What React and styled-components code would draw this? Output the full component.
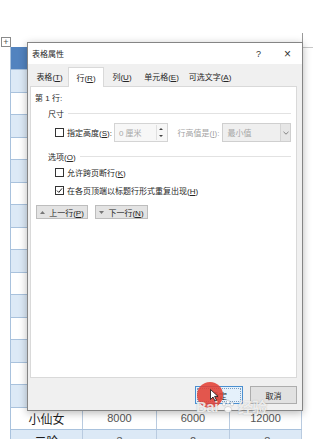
import React from 'react';
import styled, { createGlobalStyle } from 'styled-components';

const GlobalStyle = createGlobalStyle`
  html, body {
    margin: 0;
    padding: 0;
    background: #fff;
  }
  body {
    font-family: "Liberation Sans", "Noto Sans CJK SC", sans-serif;
  }
`;

// Word page with the table behind the dialog

const Page = styled.div`
  position: relative;
  width: 313px;
  height: 439px;
  overflow: hidden;
  box-sizing: border-box;
  padding: 47px 0 0 10px;
  background: #fff;
`;

const Table = styled.div`
  position: relative;
  width: 292px;
  border-left: 1px solid #a9c2dd;
  box-sizing: border-box;

  &::after {
    content: '';
    position: absolute;
    left: 291px;
    top: -14px;
    width: 11px;
    height: 14px;
    border-left: 1px solid #9a9a9a;
    border-bottom: 1px solid #c8c8c8;
  }
`;

const MoveHandle = styled.div`
  position: absolute;
  left: -10px;
  top: -10px;
  width: 8px;
  height: 8px;
  border: 1px solid #8a8a8a;
  background: #fff;
  font-size: 9px;
  line-height: 8px;
  text-align: center;
  color: #555;
`;

const Row = styled.div`
  display: grid;
  grid-template-columns: 72px 74px 73px 72px;
  height: ${(p) => (p.$head ? '23px' : '22.5px')};
  box-sizing: border-box;
  border-bottom: 1px solid #a9c2dd;
  background: ${(p) => (p.$head ? '#5283bf' : p.$shaded ? '#dce9f6' : '#fff')};
`;

const Cell = styled.div`
  display: flex;
  align-items: center;
  justify-content: center;
  border-right: 1px solid #b9cbe0;
  font-family: ${(p) => (p.$name ? '"Noto Sans CJK SC", sans-serif' : '"Liberation Sans", sans-serif')};
  font-size: ${(p) => (p.$name ? '12px' : '11px')};
  color: ${(p) => (p.$name ? '#1e1e1e' : '#555')};
`;

// Dialog

const Dialog = styled.div`
  position: absolute;
  left: 27px;
  top: 42px;
  width: 276px;
  height: 369px;
  box-sizing: border-box;
  display: flex;
  flex-direction: column;
  border: 1px solid #858585;
  background: #f0f0f0;
  box-shadow: 0 2px 8px rgba(0, 0, 0, 0.28);
  font-size: 8px;
  color: #262626;
`;

const TitleBar = styled.div`
  display: flex;
  align-items: center;
  height: 21px;
  padding-left: 4px;
  background: #fff;
`;

const Title = styled.span`
  flex: 1;
  font-size: 8px;
`;

const TitleButton = styled.span`
  width: 29px;
  text-align: center;
  font-size: ${(p) => (p.$close ? '12px' : '9px')};
  color: #333;
`;

const Body = styled.div`
  flex: 1;
  display: flex;
  flex-direction: column;
  padding: 0 5px 0 2px;
`;

const Tabs = styled.div`
  display: flex;
  align-items: flex-end;
  height: 22px;
  margin-left: 1px;
`;

const Tab = styled.div`
  width: ${(p) => p.$w}px;
  height: 20px;
  box-sizing: border-box;
  display: flex;
  align-items: center;
  justify-content: center;
  position: relative;
  top: ${(p) => (p.$active ? '1px' : '0')};
  background: ${(p) => (p.$active ? '#fff' : 'transparent')};
  border: 1px solid ${(p) => (p.$active ? '#d9d9d9' : 'transparent')};
  border-bottom: none;
  z-index: 1;
`;

const Panel = styled.div`
  height: 292px;
  box-sizing: border-box;
  padding: 0 5px 0 4px;
  background: #fff;
  border: 1px solid #d9d9d9;
`;

const Heading = styled.div`
  height: 12px;
  margin-top: 4px;
  display: flex;
  align-items: center;
`;

const GroupTitle = styled.div`
  display: flex;
  align-items: center;
  height: 14px;
  margin: ${(p) => p.$mt}px 0 0 13px;

  &::after {
    content: '';
    flex: 1;
    margin-left: 4px;
    border-top: 1px solid #e2e2e2;
  }
`;

const OptionRow = styled.div`
  display: flex;
  align-items: center;
  height: ${(p) => p.$h || 14}px;
  margin: ${(p) => p.$mt}px 0 0 20px;
`;

const Box = styled.span`
  width: 9px;
  height: 9px;
  box-sizing: border-box;
  border: 1px solid #333;
  background: #fff;
  margin-right: 3px;
  display: flex;
  align-items: center;
  justify-content: center;
`;

const Label = styled.span`
  color: ${(p) => (p.$disabled ? '#a3a3a3' : '#262626')};
  margin-right: ${(p) => p.$mr || 0}px;
  white-space: nowrap;
`;

const Spinner = styled.div`
  width: 54px;
  height: 19px;
  box-sizing: border-box;
  display: flex;
  align-items: center;
  border: 1px solid #d4d4d4;
  background: #f7f7f7;
  color: #a8a8a8;
  padding-left: 4px;
  margin-right: 10px;
`;

const SpinArrows = styled.span`
  margin-left: auto;
  width: 9px;
  height: 15px;
  display: flex;
  flex-direction: column;
  justify-content: space-around;
  align-items: center;
  border-left: 1px solid #e0e0e0;
  margin-right: 1px;
`;

const SpinTri = styled.span`
  width: 0;
  height: 0;
  border-left: 2px solid transparent;
  border-right: 2px solid transparent;
  ${(p) => (p.$down ? 'border-top: 2px solid #444;' : 'border-bottom: 2px solid #444;')}
`;

const Select = styled.div`
  width: 69px;
  height: 19px;
  box-sizing: border-box;
  display: flex;
  align-items: center;
  border: 1px solid #cfcfcf;
  background: #efefef;
  color: #a6a6a6;
  padding-left: 4px;
  margin-left: 3px;
`;

const SelectArrow = styled.span`
  margin-left: auto;
  width: 10px;
  height: 17px;
  box-sizing: border-box;
  display: flex;
  align-items: center;
  justify-content: center;
  border-left: 1px solid #d4d4d4;
  background: #e6e6e6;
`;

const NavRow = styled.div`
  display: flex;
  gap: 7px;
  margin: 8px 0 0 1px;
`;

const NavButton = styled.div`
  width: ${(p) => p.$w}px;
  height: 14px;
  box-sizing: border-box;
  display: flex;
  align-items: center;
  justify-content: center;
  gap: 4px;
  background: #e3e3e3;
  border: 1px solid #bdbdbd;
`;

const Footer = styled.div`
  display: flex;
  justify-content: flex-end;
  gap: 7px;
  padding-top: 8px;
`;

const Button = styled.div`
  width: ${(p) => p.$w}px;
  height: 18px;
  box-sizing: border-box;
  display: flex;
  align-items: center;
  justify-content: center;
  background: ${(p) => (p.$primary ? '#e5f1fb' : '#e1e1e1')};
  border: 1px solid ${(p) => (p.$primary ? '#4a8fd0' : '#adadad')};
  outline: ${(p) => (p.$primary ? '1px dotted #7a9cc0' : 'none')};
  outline-offset: -3px;
`;

// Overlays from the recording

const Highlight = styled.div`
  position: absolute;
  left: 197px;
  top: 382px;
  width: 26px;
  height: 26px;
  border-radius: 50%;
  background: rgba(226, 64, 52, 0.88);
`;

const Pointer = styled.svg`
  position: absolute;
  left: 210px;
  top: 389px;
`;

const Watermark = styled.div`
  position: absolute;
  left: 196px;
  top: 396px;
  display: flex;
  align-items: center;
  gap: 2px;
  font-family: "Liberation Sans", "Noto Sans CJK SC", sans-serif;
  font-weight: bold;
  font-size: 15px;
  color: rgba(255, 255, 255, 0.8);
  text-shadow: 0 0 1px rgba(120, 120, 120, 0.6);
  letter-spacing: -0.5px;
`;

const tabs = [
  { key: 'T', text: '表格', w: 37 },
  { key: 'R', text: '行', w: 36, active: true },
  { key: 'U', text: '列', w: 36 },
  { key: 'E', text: '单元格', w: 43 },
  { key: 'A', text: '可选文字', w: 54 },
];

const rows = Array.from({ length: 17 }, (_, i) => {
  if (i === 15) return ['小仙女', '8000', '6000', '12000'];
  if (i === 16) return ['二哈', '3', '2', '-8'];
  return ['', '', '', ''];
});

const Key = ({ k }) => (
  <>
    (<u>{k}</u>)
  </>
);

const Check = () => (
  <svg width="7" height="7" viewBox="0 0 7 7">
    <path d="M1 3.6 L2.8 5.4 L6 1.4" fill="none" stroke="#222" strokeWidth="1" />
  </svg>
);

export default function App() {
  return (
    <>
      <GlobalStyle />
      <Page>
        <Table>
          <MoveHandle>+</MoveHandle>
          <Row $head>
            <Cell />
            <Cell />
            <Cell />
            <Cell />
          </Row>
          {rows.map((r, i) => (
            <Row key={i} $shaded={i % 2 === 0}>
              {r.map((c, j) => (
                <Cell key={j} $name={j === 0}>
                  {c}
                </Cell>
              ))}
            </Row>
          ))}
        </Table>

        <Dialog>
          <TitleBar>
            <Title>表格属性</Title>
            <TitleButton>?</TitleButton>
            <TitleButton $close>×</TitleButton>
          </TitleBar>
          <Body>
            <Tabs>
              {tabs.map((t) => (
                <Tab key={t.key} $w={t.w} $active={t.active}>
                  <span>
                    {t.text}
                    <Key k={t.key} />
                  </span>
                </Tab>
              ))}
            </Tabs>
            <Panel>
              <Heading>第 1 行:</Heading>
              <GroupTitle $mt={3}>尺寸</GroupTitle>
              <OptionRow $mt={3} $h={19}>
                <Box />
                <Label $mr={2}>
                  指定高度<Key k="S" />:
                </Label>
                <Spinner>
                  <span>0 厘米</span>
                  <SpinArrows>
                    <SpinTri />
                    <SpinTri $down />
                  </SpinArrows>
                </Spinner>
                <Label $disabled>
                  行高值是<Key k="I" />:
                </Label>
                <Select>
                  <span>最小值</span>
                  <SelectArrow>
                    <svg width="6" height="4" viewBox="0 0 6 4">
                      <path d="M0.5 0.8 L3 3.2 L5.5 0.8" fill="none" stroke="#777" strokeWidth="0.9" />
                    </svg>
                  </SelectArrow>
                </Select>
              </OptionRow>
              <GroupTitle $mt={7}>
                <span>
                  选项<Key k="O" />
                </span>
              </GroupTitle>
              <OptionRow $mt={2}>
                <Box />
                <Label>
                  允许跨页断行<Key k="K" />
                </Label>
              </OptionRow>
              <OptionRow $mt={4}>
                <Box>
                  <Check />
                </Box>
                <Label>
                  在各页顶端以标题行形式重复出现<Key k="H" />
                </Label>
              </OptionRow>
              <NavRow>
                <NavButton $w={52}>
                  <svg width="5" height="3" viewBox="0 0 5 3">
                    <path d="M0 3 L2.5 0 L5 3 Z" fill="#777" />
                  </svg>
                  <span>
                    上一行<Key k="P" />
                  </span>
                </NavButton>
                <NavButton $w={53}>
                  <svg width="5" height="3" viewBox="0 0 5 3">
                    <path d="M0 0 L2.5 3 L5 0 Z" fill="#777" />
                  </svg>
                  <span>
                    下一行<Key k="N" />
                  </span>
                </NavButton>
              </NavRow>
            </Panel>
            <Footer>
              <Button $primary $w={48}>
                确定
              </Button>
              <Button $w={47}>取消</Button>
            </Footer>
          </Body>
        </Dialog>

        <Highlight />
        <Pointer width="9" height="13" viewBox="0 0 9 13">
          <path d="M0.5 0.5 L0.5 10.5 L3 8 L5 12 L6.5 11.3 L4.6 7.4 L8 7.4 Z" fill="#fff" stroke="#111" strokeWidth="0.8" />
        </Pointer>
        <Watermark>
          Bai
          <svg width="16" height="16" viewBox="0 0 16 16">
            <g fill="rgba(255,255,255,0.85)" stroke="rgba(120,120,120,0.5)" strokeWidth="0.5">
              <ellipse cx="4" cy="5" rx="1.6" ry="2" />
              <ellipse cx="8" cy="3" rx="1.6" ry="2" />
              <ellipse cx="12" cy="5" rx="1.6" ry="2" />
              <ellipse cx="8" cy="10.5" rx="3.6" ry="3" />
            </g>
          </svg>
          经验
        </Watermark>
      </Page>
    </>
  );
}
